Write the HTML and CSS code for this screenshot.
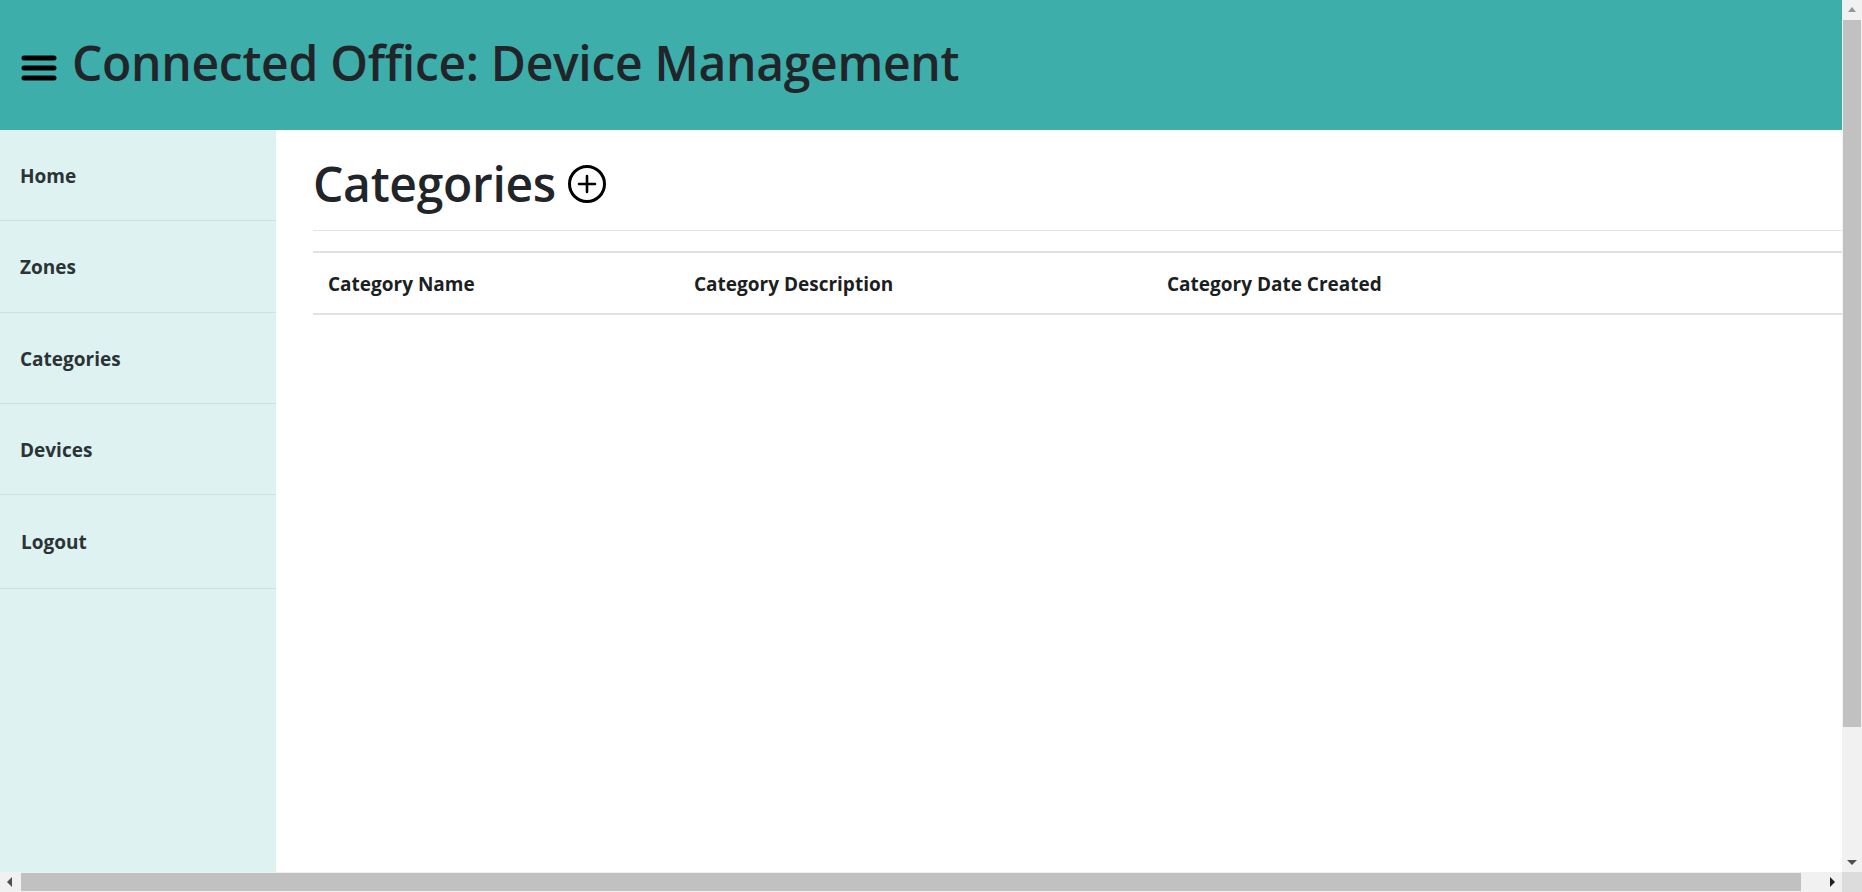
FILE: index.html
```html
<!DOCTYPE html>
<html lang="en">
<head>
    <meta charset="UTF-8">
    <meta name="viewport" content="width=device-width, initial-scale=1.0">
    <title>Connected Office: Device Management</title>
    <link rel="stylesheet" href="styles.css">
</head>
<body>
    <div class="page">
        <header class="topbar">
            <svg class="menu-icon" viewBox="0 0 36 30" width="36" height="30">
                <path d="M3 3H33M3 13H33M3 23H33" fill="none" stroke="#000" stroke-width="5" stroke-linecap="round"/>
            </svg>
            <h1>Connected Office: Device Management</h1>
        </header>
        <div class="body-row">
            <nav class="sidebar">
                <a href="#">Home</a>
                <a href="#">Zones</a>
                <a href="#">Categories</a>
                <a href="#">Devices</a>
                <a href="#" class="logout">Logout</a>
            </nav>
            <main class="content">
                <div class="title-row">
                    <h2>Categories</h2>
                    <svg class="add-icon" viewBox="0 0 40 40" width="40" height="40">
                        <circle cx="20" cy="20" r="17.5" fill="none" stroke="#000" stroke-width="3"/>
                        <path d="M20 12V28M12 20H28" fill="none" stroke="#000" stroke-width="2.6" stroke-linecap="round"/>
                    </svg>
                </div>
                <hr>
                <table>
                    <thead>
                        <tr>
                            <th class="col-name">Category Name</th>
                            <th class="col-desc">Category Description</th>
                            <th>Category Date Created</th>
                        </tr>
                    </thead>
                </table>
            </main>
        </div>
    </div>

    <!-- window scrollbars -->
    <div class="vbar">
        <svg viewBox="0 0 20 20" width="20" height="20"><path d="M6 12L10 7L14 12Z" fill="#8a9a98"/></svg>
        <div class="vtrack"><div class="vthumb"></div></div>
        <svg viewBox="0 0 20 20" width="20" height="20"><path d="M5 8L15 8L10 13Z" fill="#505050"/></svg>
    </div>
    <div class="hbar">
        <svg viewBox="0 0 20 20" width="20" height="20"><path d="M12 5V15L7 10Z" fill="#505050"/></svg>
        <div class="htrack"><div class="hthumb"></div></div>
        <svg viewBox="0 0 20 20" width="20" height="20"><path d="M8 5V15L13 10Z" fill="#202020"/></svg>
    </div>
    <div class="corner"></div>
</body>
</html>
```

FILE: styles.css
```css
html, body {
    margin: 0;
    height: 100%;
    overflow: hidden;
}
body {
    display: grid;
    grid-template-columns: 1fr 20px;
    grid-template-rows: 1fr 20px;
    height: 892px;
    font-family: "Open Sans", "Noto Sans", sans-serif;
    color: #212529;
    background-color: #fff;
}
.page {
    display: flex;
    flex-direction: column;
    min-width: 0;
    min-height: 0;
}
.topbar {
    display: flex;
    align-items: center;
    gap: 15px;
    height: 130px;
    padding-left: 21px;
    padding-bottom: 4px;
    box-sizing: border-box;
    background-color: #3eaeaa;
}
.menu-icon {
    flex: none;
    margin-top: 14px;
}
h1 {
    margin: 0;
    font-size: 48px;
    font-weight: 600;
    letter-spacing: -0.3px;
    line-height: 1.2;
}
.body-row {
    display: flex;
    flex: 1;
    min-height: 0;
}
.sidebar {
    display: flex;
    flex-direction: column;
    flex: 0 0 276px;
    background-color: #def3f1;
}
.sidebar a {
    display: flex;
    align-items: center;
    height: 91.25px;
    padding-top: 2px;
    padding-left: 20px;
    box-sizing: border-box;
    border-bottom: 1px solid #cde2e0;
    color: #2b3336;
    font-size: 19px;
    font-weight: 700;
    text-decoration: none;
}
.sidebar a.logout {
    height: 94px;
    padding-top: 0;
    padding-left: 21px;
}
.content {
    flex: 1;
    min-width: 0;
    padding-left: 37px;
}
.title-row {
    display: flex;
    align-items: center;
    gap: 11px;
    height: 100px;
    padding-top: 8px;
    box-sizing: border-box;
}
h2 {
    margin: 0;
    font-size: 48px;
    font-weight: 600;
    letter-spacing: -0.3px;
    line-height: 1.2;
}
hr {
    margin: 0;
    border: 0;
    border-top: 1px solid #e2e4e6;
}
table {
    width: 100%;
    margin-top: 20px;
    border-collapse: collapse;
}
th {
    height: 62px;
    padding: 2px 15px 0;
    box-sizing: border-box;
    border-top: 2px solid #dee2e6;
    border-bottom: 2px solid #dee2e6;
    color: #1b1f22;
    font-size: 19px;
    font-weight: 700;
    text-align: left;
}
.col-name {
    width: 366px;
}
.col-desc {
    width: 473px;
}
.vbar {
    display: flex;
    flex-direction: column;
    grid-column: 2;
    grid-row: 1;
    background-color: #f1f1f1;
}
.vtrack {
    flex: 1;
    padding: 0 1px;
}
.vthumb {
    height: 707px;
    background-color: #c1c1c1;
}
.hbar {
    display: flex;
    grid-column: 1;
    grid-row: 2;
    background-color: #f1f1f1;
}
.htrack {
    flex: 1;
    padding: 1px 0 1px 1px;
}
.hthumb {
    width: 1780px;
    height: 18px;
    background-color: #c1c1c1;
}
.corner {
    background-color: #dcdcdc;
}
```
